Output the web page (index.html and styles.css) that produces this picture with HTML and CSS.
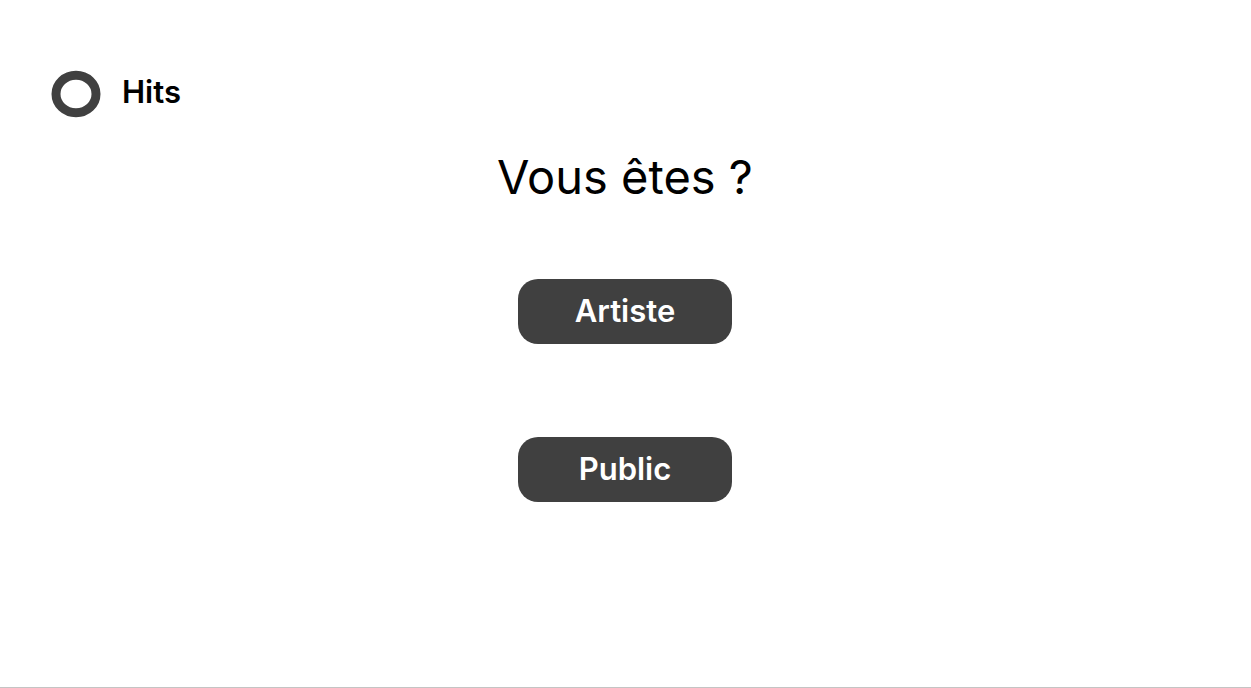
FILE: index.html
```html
<!DOCTYPE html>
<html lang="fr">
<head>
<meta charset="utf-8">
<meta name="viewport" content="width=device-width, initial-scale=1">
<title>Hits</title>
<link rel="stylesheet" href="styles.css">
</head>
<body>
<div class="page">
  <header class="brand">
    <svg class="logo" viewBox="0 0 50 48" aria-hidden="true"><ellipse cx="25" cy="24" rx="20" ry="18.8" fill="none" stroke="#404040" stroke-width="9"/></svg>
    <span class="brand-name">Hits</span>
  </header>
  <main class="choices">
    <h1 class="title">Vous êtes ?</h1>
    <button class="choice" type="button">Artiste</button>
    <button class="choice" type="button">Public</button>
  </main>
</div>
</body>
</html>
```
FILE: styles.css
```css
* { box-sizing: border-box; }

body {
  margin: 0;
  background: #fff;
  color: #000;
  font-family: Inter, sans-serif;
}

.page {
  min-height: 100vh;
  padding-top: 70px;
  border-bottom: 1px solid #c4c4c4;
}

.brand {
  display: flex;
  align-items: center;
  gap: 21px;
  padding-left: 51px;
}

.logo {
  width: 50px;
  height: 48px;
}

.brand-name {
  font-size: 31px;
  font-weight: 600;
  line-height: 44px;
  padding-bottom: 4px;
}

.choices {
  display: flex;
  flex-direction: column;
  align-items: center;
  padding-right: 1px;
}

.title {
  margin: 30px 0 73px;
  font-size: 47px;
  font-weight: 400;
  line-height: 58px;
}

.choice {
  width: 214px;
  height: 65px;
  margin-bottom: 93px;
  padding: 0 0 2px;
  border: 0;
  border-radius: 20px;
  background: #404040;
  color: #fff;
  font-family: inherit;
  font-size: 31px;
  font-weight: 600;
}
```
